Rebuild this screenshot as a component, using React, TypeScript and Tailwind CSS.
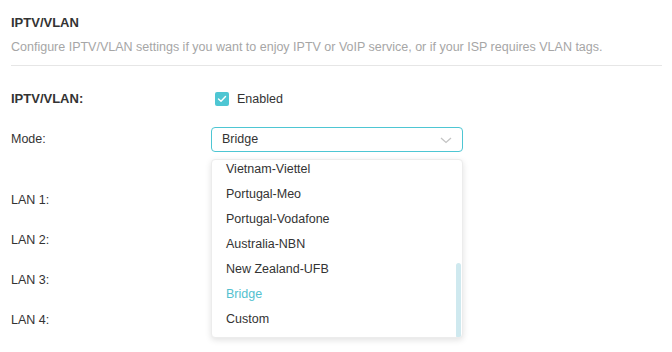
const MODES = [
  "Vietnam-Viettel",
  "Portugal-Meo",
  "Portugal-Vodafone",
  "Australia-NBN",
  "New Zealand-UFB",
  "Bridge",
  "Custom",
];

export default function App() {
  const selected = "Bridge";

  return (
    <div className="w-[672px] h-[352px] overflow-hidden bg-white px-[11px] pt-[13px] text-[12.5px] text-[#333] font-['Liberation_Sans',Arial,sans-serif]">
      {/* Header */}
      <h2 className="leading-[20px] font-bold text-[13px]">IPTV/VLAN</h2>
      <p className="mt-[4px] leading-[20px] text-[#a6a6a6]">
        Configure IPTV/VLAN settings if you want to enjoy IPTV or VoIP service, or if your ISP requires VLAN tags.
      </p>
      <div className="mt-[8px] h-px w-[651px] bg-[#e6e6e6]" />

      {/* Form */}
      <div className="mt-[13px] grid grid-cols-[200px_252px]">
        <div className="h-[40px] flex items-center font-bold text-[13px]">IPTV/VLAN:</div>
        <div className="h-[40px] flex items-center pl-[4px] gap-[8px]">
          <span className="w-[14px] h-[14px] rounded-[2px] bg-[#4ec6d3] flex items-center justify-center">
            <svg width="10" height="8" viewBox="0 0 10 8" fill="none">
              <path d="M1.5 4 L4 6.3 L8.5 1.5" stroke="white" strokeWidth="1.4" strokeLinecap="round" strokeLinejoin="round" />
            </svg>
          </span>
          <span>Enabled</span>
        </div>

        <div className="h-[40px] flex items-center">Mode:</div>
        <div className="h-[40px] flex items-center">
          <div className="relative w-full">
            <div className="h-[25px] w-full rounded-[4px] border border-[#4ec6d3] flex items-center justify-between pl-[10px] pr-[10px]">
              <span>{selected}</span>
              <svg width="12" height="7" viewBox="0 0 12 7" fill="none" className="mt-[2px]">
                <path d="M1 1 L6 5.5 L11 1" stroke="#c4c4c4" strokeWidth="1.3" />
              </svg>
            </div>

            {/* Dropdown menu */}
            <div className="absolute left-0 top-[32px] z-10 w-[252px] h-[179px] overflow-hidden rounded-[4px] border border-[#ececec] bg-white shadow-[0_2px_6px_rgba(0,0,0,0.12)]">
              <ul className="-mt-[3px]">
                {MODES.map((m) => (
                  <li
                    key={m}
                    className={`h-[25px] leading-[25px] pl-[14px] ${m === selected ? "text-[#53c1cf]" : "text-[#333]"}`}
                  >
                    {m}
                  </li>
                ))}
              </ul>
              <div className="absolute right-[1px] top-[103px] w-[5px] h-[75px] rounded-full bg-[#cfe9ef]" />
            </div>
          </div>
        </div>
      </div>

      <div className="mt-[21px] flex flex-col">
        {["LAN 1:", "LAN 2:", "LAN 3:", "LAN 4:"].map((l) => (
          <div key={l} className="h-[40px] flex items-center">
            {l}
          </div>
        ))}
      </div>
    </div>
  );
}
